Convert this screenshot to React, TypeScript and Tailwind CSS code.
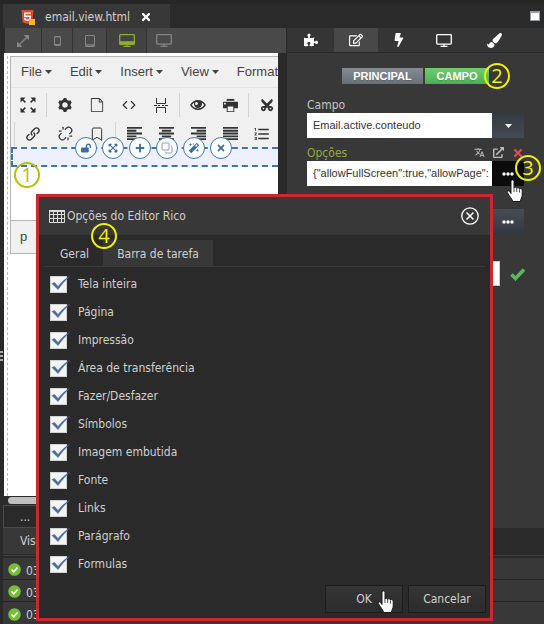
import type { ReactNode } from 'react';
import {
  FaBolt,
  FaCut,
  FaExpandArrowsAlt,
  FaExternalLinkAlt,
  FaHtml5,
  FaLockOpen,
  FaMagic,
  FaPaintBrush,
  FaPlus,
  FaPuzzlePiece,
  FaRegEdit,
  FaTimes,
} from 'react-icons/fa';
import {
  ImCog,
  ImEye,
  ImFileEmpty,
  ImLink,
  ImParagraphCenter,
  ImParagraphJustify,
  ImParagraphLeft,
  ImParagraphRight,
  ImPrinter,
} from 'react-icons/im';
import { MdFormatListNumbered, MdOpenInFull, MdTranslate, MdZoomOutMap } from 'react-icons/md';
import { Bookmark, Code, Copy, Unlink } from 'lucide-react';

const MENUS = ['File', 'Edit', 'Insert', 'View', 'Format'];

const OPTIONS = [
  'Tela inteira',
  'Página',
  'Impressão',
  'Área de transferência',
  'Fazer/Desfazer',
  'Símbolos',
  'Imagem embutida',
  'Fonte',
  'Links',
  'Parágrafo',
  'Formulas',
];

function Monitor({ filled = false }: { filled?: boolean }) {
  return (
    <svg width="16" height="13" viewBox="0 0 16 13" fill="none" stroke="currentColor" strokeWidth="1.3" aria-hidden="true">
      <rect x="0.7" y="0.7" width="14.6" height="9.4" rx="0.8" fill="none" />
      {filled && <path d="M1 8h14v2H1z" fill="currentColor" />}
      <path d="M8 10v2M4.500 12.300h7" />
    </svg>
  );
}

function Tablet({ small = false }: { small?: boolean }) {
  return small ? (
    <svg width="7" height="10" viewBox="0 0 7 10" fill="none" stroke="currentColor" aria-hidden="true">
      <rect x="0.500" y="0.500" width="6" height="9" rx="0.500" />
      <path d="M1 1h5M1 8.500h5" />
    </svg>
  ) : (
    <svg width="10" height="12" viewBox="0 0 10 12" fill="none" stroke="currentColor" aria-hidden="true">
      <rect x="0.500" y="0.500" width="9" height="11" rx="0.500" />
      <path d="M1 10h8" strokeWidth="1.4" />
    </svg>
  );
}

function PageBreak() {
  return (
    <svg width="14" height="15" viewBox="0 0 14 15" fill="none" stroke="currentColor" aria-hidden="true">
      <path d="M2.500 0v5.500h9V0M2.500 15V9.500h9V15" />
      <path d="M0 7.500h3M4 7.500h2M8 7.500h2M11 7.500h3" />
    </svg>
  );
}

function Dots() {
  return (
    <svg width="12" height="4" viewBox="0 0 12 4" fill="#fff" aria-hidden="true">
      <circle cx="2" cy="2" r="1.700" />
      <circle cx="6" cy="2" r="1.700" />
      <circle cx="10" cy="2" r="1.700" />
    </svg>
  );
}

function Caret() {
  return (
    <svg width="7" height="4" viewBox="0 0 7 4" fill="currentColor" aria-hidden="true">
      <path d="M0 0h7L3.500 4z" />
    </svg>
  );
}

function Hand() {
  return (
    <svg width="18" height="24" viewBox="0 0 18 24" aria-hidden="true">
      <path
        d="M5 2.500C5 .4 8 .4 8 2.500V9c.3-1.200 2.600-1.100 2.700.4.500-1.100 2.700-.9 2.800.6.600-.9 2.700-.6 2.700 1.200V16c0 2.600-1.600 3.600-1.800 6.500H6.600C6.300 20 3.400 17.500 1.400 13.600.8 12 2.800 11.200 3.800 12.800L5 14.500z"
        fill="#fff"
        stroke="#1a1a1a"
        strokeWidth="1"
      />
      <path d="M8 9v4M10.700 9.500V13M13.500 10.500V13.500" stroke="#1a1a1a" strokeWidth="0.800" />
    </svg>
  );
}

function Step({ children, className }: { children: ReactNode; className: string }) {
  return (
    <span
      className={`absolute z-30 flex size-[26px] items-center justify-center rounded-full border-2 font-['Open_Sans',sans-serif] text-xl leading-none ${className}`}
    >
      {children}
    </span>
  );
}

function Tool({ label, children }: { label: string; children: ReactNode }) {
  return (
    <button type="button" aria-label={label} className="flex h-7 w-8 shrink-0 items-center justify-center">
      {children}
    </button>
  );
}

function Sep() {
  return <span className="mx-0.5 h-6 w-px shrink-0 bg-[#d4d4d4]" />;
}

function Bubble({ label, children }: { label: string; children: ReactNode }) {
  return (
    <button
      type="button"
      aria-label={label}
      className="flex size-[22px] items-center justify-center rounded-full border border-[#3c76ab] bg-white text-[#3c6ea3]"
    >
      {children}
    </button>
  );
}

function FileTabs() {
  return (
    <header className="flex h-7 items-end justify-between border-t-4 border-[#262626] pl-[3px]">
      <div className="flex h-6 w-[167px] items-center bg-[#383838] pt-0.5 pl-[17px] text-[#cfcfcf]">
        <span className="relative mr-2.5 flex text-[#dc4e2c]">
          <span className="absolute inset-x-1 inset-y-0.5 bg-white" />
          <FaHtml5 className="relative h-4 w-[15px]" />
          <span className="absolute right-0 bottom-0 size-1.5 bg-[#fbb917]" />
        </span>
        <span>email.view.html</span>
        <button type="button" aria-label="Fechar arquivo" className="ml-2.5 text-white">
          <FaTimes className="size-3" />
        </button>
      </div>
      <button type="button" aria-label="Maximizar" className="mr-1 mb-[7px] size-2.5 border border-t-2 border-[#8f9bab] bg-white" />
    </header>
  );
}

function PreviewBar() {
  return (
    <div className="ml-[5px] flex h-[25px] shrink-0 divide-x divide-[#333] bg-[#494949] text-[#858585]">
      <button type="button" aria-label="Expandir" className="flex w-[37px] items-center justify-center">
        <MdOpenInFull className="size-4" />
      </button>
      <button type="button" aria-label="Celular" className="flex w-[31px] items-center justify-center">
        <Tablet small />
      </button>
      <button type="button" aria-label="Tablet" className="flex w-[34px] items-center justify-center">
        <Tablet />
      </button>
      <button type="button" aria-label="Desktop" className="flex w-10 items-center justify-center bg-[#424242] text-[#8fae2f]">
        <Monitor filled />
      </button>
      <button type="button" aria-label="Tela grande" className="flex w-[34px] items-center justify-center">
        <Monitor />
      </button>
    </div>
  );
}

function RichEditor() {
  return (
    <div className="mr-2 ml-1 flex-1 overflow-hidden bg-white pt-[3px] pl-[3px] font-['Liberation_Sans',Arial,sans-serif] text-[#333]">
      <div className="h-full border-l border-dashed border-[#bdbdbd] pl-0.5">
        <div className="border-y border-l border-[#b5b5b5] bg-[#f0f0f0]">
          <div className="flex h-[31px] w-max items-center gap-[18px] border-b border-[#e4e4e4] pl-2.5 text-[13px] text-[#444]">
            {MENUS.map((menu) => (
              <button key={menu} type="button" className="flex items-center gap-[3px]">
                {menu}
                <Caret />
              </button>
            ))}
          </div>
          <div className="flex h-[30px] w-max items-center pt-1 pl-px">
            <Tool label="Fullscreen"><MdZoomOutMap className="size-5" /></Tool>
            <Sep />
            <Tool label="Settings"><ImCog className="size-3.5" /></Tool>
            <Tool label="New document"><ImFileEmpty className="size-3.5" /></Tool>
            <Tool label="Source code"><Code className="size-3.5" strokeWidth={2} /></Tool>
            <Tool label="Page break"><PageBreak /></Tool>
            <Sep />
            <Tool label="Preview"><ImEye className="size-4" /></Tool>
            <Tool label="Print"><ImPrinter className="size-[15px]" /></Tool>
            <Sep />
            <Tool label="Cut"><FaCut className="size-3.5 -rotate-90" /></Tool>
          </div>
          <div className="flex h-[29px] w-max items-center pt-0.5 pl-px">
            <Sep />
            <Tool label="Insert link"><ImLink className="size-3.5" /></Tool>
            <Tool label="Remove link"><Unlink className="size-[15px]" strokeWidth={2} /></Tool>
            <Tool label="Anchor"><Bookmark className="size-4" strokeWidth={1.5} /></Tool>
            <Sep />
            <Tool label="Align left"><ImParagraphLeft className="size-[15px]" /></Tool>
            <Tool label="Align center"><ImParagraphCenter className="size-[15px]" /></Tool>
            <Tool label="Align right"><ImParagraphRight className="size-[15px]" /></Tool>
            <Tool label="Justify"><ImParagraphJustify className="size-[15px]" /></Tool>
            <Tool label="Numbered list"><MdFormatListNumbered className="size-[18px]" /></Tool>
          </div>
          <div className="relative h-5 border-y-2 border-l-2 border-dashed border-[#3c76ab] bg-[#eef0ff]">
            <div className="absolute -top-3 left-[62px] flex gap-[5px]">
              <Bubble label="Desbloquear"><FaLockOpen className="size-2.5" /></Bubble>
              <Bubble label="Mover"><FaExpandArrowsAlt className="size-2.5" /></Bubble>
              <Bubble label="Adicionar"><FaPlus className="size-2.5" /></Bubble>
              <Bubble label="Duplicar"><Copy className="size-3 -scale-100 text-[#8b9bc4]" /></Bubble>
              <Bubble label="Estilizar"><FaMagic className="size-2.5" /></Bubble>
              <Bubble label="Remover"><FaTimes className="size-2.5" /></Bubble>
            </div>
          </div>
          <div className="h-[53px] bg-white" />
          <div className="flex h-[33px] items-center border-t border-[#b5b5b5] pl-[9px] text-[13px] text-[#444]">p</div>
        </div>
      </div>
    </div>
  );
}

function Properties() {
  return (
    <aside className="flex flex-col bg-[#383838]">
      <nav className="flex h-[25px] border-b border-[#2a2a2a] bg-[#353535] text-white">
        <button type="button" aria-label="Componentes" className="flex w-[47px] items-center justify-center">
          <FaPuzzlePiece className="size-3.5" />
        </button>
        <button type="button" aria-label="Editar" className="flex w-11 items-center justify-center bg-[#484848]">
          <FaRegEdit className="size-3.5" />
        </button>
        <button type="button" aria-label="Eventos" className="flex w-[42px] items-center justify-center">
          <FaBolt className="size-3.5" />
        </button>
        <button type="button" aria-label="Visualização" className="flex w-12 items-center justify-center">
          <Monitor />
        </button>
        <button type="button" aria-label="Estilo" className="flex w-[52px] items-center justify-center">
          <FaPaintBrush className="size-[15px]" />
        </button>
      </nav>
      <div className="flex justify-center gap-0.5 pt-[15px] font-['Liberation_Sans',Arial,sans-serif] text-[11px] font-bold text-white">
        <button type="button" className="h-4 w-[81px] bg-linear-to-b from-[#858c94] to-[#686f76] leading-4 text-shadow-2xs">
          PRINCIPAL
        </button>
        <button type="button" className="h-4 w-16 bg-linear-to-b from-[#72cb6e] to-[#4cb050] leading-4 text-shadow-2xs">
          CAMPO
        </button>
      </div>
      <div className="px-5 pt-3">
        <label htmlFor="campo" className="flex h-[17px] items-center text-[#c4c4c4]">
          Campo
        </label>
        <div className="flex h-[25px]">
          <input
            id="campo"
            defaultValue="Email.active.conteudo"
            className="min-w-0 flex-1 bg-white px-1.5 font-['Liberation_Sans',Arial,sans-serif] text-[11px] text-[#333]"
          />
          <button type="button" aria-label="Abrir lista" className="flex w-8 items-center justify-center bg-linear-to-b from-[#343a42] to-[#464b52] text-white">
            <Caret />
          </button>
        </div>
        <div className="flex h-[23px] items-center justify-between pt-1.5 text-[#8fae2f]">
          <label htmlFor="opcoes">Opções</label>
          <span className="flex items-center gap-2 text-[#bdbdbd]">
            <button type="button" aria-label="Traduzir"><MdTranslate className="size-[11px]" /></button>
            <button type="button" aria-label="Abrir"><FaExternalLinkAlt className="size-[11px]" /></button>
            <button type="button" aria-label="Limpar" className="text-[#dc4b48]"><FaTimes className="size-3" /></button>
          </span>
        </div>
        <div className="flex h-[25px]">
          <input
            id="opcoes"
            defaultValue={'{"allowFullScreen":true,"allowPage":'}
            className="min-w-0 flex-1 bg-white pl-1.5 font-['Liberation_Sans',Arial,sans-serif] text-[11px] text-[#333]"
          />
          <button type="button" aria-label="Mais opções" className="flex w-8 items-center justify-center bg-[#0c0c0c]">
            <Dots />
          </button>
        </div>
        <div className="mt-[23px] flex h-[25px]">
          <input aria-label="Valor" className="min-w-0 flex-1 bg-white" />
          <button type="button" aria-label="Mais valores" className="flex w-8 items-center justify-center bg-linear-to-b from-[#484d55] to-[#343940]">
            <Dots />
          </button>
        </div>
        <div className="-mr-0.5 mt-[27px] flex items-center gap-2.5">
          <input aria-label="Condição" className="h-[25px] min-w-0 flex-1 border border-[#ccc] bg-white" />
          <svg width="16" height="14" viewBox="0 0 16 14" aria-hidden="true">
            <path d="M1.500 7.500 5.500 11.500 14 2.500" fill="none" stroke="#5cb85c" strokeWidth="3.500" />
          </svg>
        </div>
      </div>
    </aside>
  );
}

function Console() {
  return (
    <footer className="pl-[3px] text-[#d0d0d0]">
      <div className="flex h-[26px]">
        <button type="button" className="w-40 bg-[#383838] pl-[17px] text-left">Vis</button>
      </div>
      <div className="mt-px mb-0.5 h-px bg-[#3d3d3d]" />
      <ul className="divide-y divide-[#242424] bg-[#383838]">
        {[1, 2, 3].map((row) => (
          <li key={row} className="flex h-[22px] items-center gap-[5px] pt-1 pl-[5px]">
            <svg width="13" height="13" viewBox="0 0 13 13" className="mb-0.5" aria-hidden="true">
              <circle cx="6.500" cy="6.500" r="6.300" fill="#76be36" />
              <path d="M3.500 6.500 5.700 8.700 9.500 4.500" fill="none" stroke="#fff" strokeWidth="1.700" />
            </svg>
            03
          </li>
        ))}
      </ul>
    </footer>
  );
}

function OptionsDialog() {
  return (
    <section
      role="dialog"
      aria-labelledby="dialog-title"
      className="absolute top-[194px] right-[51px] left-9 z-20 border-[3px] border-[#cb282f] bg-[#2a2a2a] text-[#d0d0d0]"
    >
      <header className="flex h-[38px] items-center bg-[#383838] pr-[11px] pl-2.5">
        <svg width="16" height="13" viewBox="0 0 16 13" fill="none" stroke="#ddd" aria-hidden="true">
          <path d="M.5.5h15v12H.5zM.5 4.500h15M.5 8.500h15M4.500.5v12M8.500.5v12M12.500.5v12" />
          <path d="M0 1h16" strokeWidth="2" />
        </svg>
        <h2 id="dialog-title" className="ml-0.5 flex-1">Opções do Editor Rico</h2>
        <button type="button" aria-label="Fechar" className="text-white">
          <svg width="18" height="18" viewBox="0 0 18 18" fill="none" stroke="currentColor" strokeWidth="1.300" aria-hidden="true">
            <circle cx="9" cy="9" r="8.200" />
            <path d="m5.500 5.500 7 7M12.500 5.500l-7 7" strokeWidth="1.500" />
          </svg>
        </button>
      </header>
      <div role="tablist" className="mx-[5px] mt-[5px] flex border-b border-[#3c3c3c]">
        <button type="button" role="tab" aria-selected="false" className="h-[26px] w-[59px] pt-0.5 pl-4 text-left">Geral</button>
        <button type="button" role="tab" aria-selected="true" className="h-[26px] w-[110px] bg-[#383838] pt-0.5">Barra de tarefa</button>
      </div>
      <ul className="pt-[3px] pb-px pl-[11px]">
        {OPTIONS.map((option) => (
          <li key={option}>
            <label className="flex h-7 items-center gap-[11px]">
              <span className="relative flex">
                <input type="checkbox" defaultChecked className="peer size-[17px] appearance-none border border-[#d2d2d2] bg-[#f4f4f6]" />
                <svg width="20" height="18" viewBox="0 0 20 18" className="pointer-events-none absolute bottom-0 left-0 hidden peer-checked:block" aria-hidden="true">
                  <path d="M2 8.500 4.500 7.500 8 11.500C11.500 7 15 4 19.500 1.500 15 5.500 11.500 9.500 8 14.500z" fill="#4a6d9e" stroke="#4a6d9e" strokeWidth="0.600" />
                </svg>
              </span>
              {option}
            </label>
          </li>
        ))}
      </ul>
      <div className="flex justify-end gap-[5px] pt-1.5 pr-1 pb-[5px]">
        <button type="button" className="relative h-7 w-[78px] border border-[#1c1c1c] bg-linear-to-b from-[#353535] to-[#2c2c2c]">
          OK
          <span className="absolute top-1 left-[51px]"><Hand /></span>
        </button>
        <button type="button" className="h-7 w-[78px] border border-[#1c1c1c] bg-linear-to-b from-[#353535] to-[#2c2c2c]">
          Cancelar
        </button>
      </div>
    </section>
  );
}

export default function App() {
  return (
    <div className="relative flex min-h-screen flex-col overflow-hidden bg-[#2a2a2a] font-['DejaVu_Sans_Condensed','DejaVu_Sans',Tahoma,sans-serif] text-xs">
      <FileTabs />
      <main className="grid flex-1 grid-cols-[minmax(0,1fr)_257px]">
        <section className="flex flex-col border-r border-[#2a2a2a]">
          <PreviewBar />
          <RichEditor />
          <div className="ml-2 h-[9px] pt-px">
            <div className="h-[7px] w-40 rounded-full bg-[#c0c0c0]" />
          </div>
          <div className="mr-2 ml-[3px] flex h-[23px] items-center border border-[#4a4a4a] pl-4 text-[#d0d0d0]">...</div>
        </section>
        <Properties />
      </main>
      <Console />
      <OptionsDialog />
      <span className="absolute top-[351px] left-0 grid gap-0.5">
        <i className="h-0.5 w-[3px] bg-[#aaa]" />
        <i className="h-0.5 w-[3px] bg-[#aaa]" />
        <i className="h-0.5 w-[3px] bg-[#aaa]" />
      </span>
      <span className="absolute top-[179px] right-5 z-30"><Hand /></span>
      <Step className="top-[162px] left-3.5 border-[#b3c10f] text-[#b3c10f]">1</Step>
      <Step className="top-[63px] right-[34px] border-[#f2f200] text-[#f2f200]">2</Step>
      <Step className="top-[155px] right-[3px] border-[#f2f200] text-[#f2f200]">3</Step>
      <Step className="top-[223px] left-[91px] border-[#f2f200] text-[#f2f200]">4</Step>
    </div>
  );
}
